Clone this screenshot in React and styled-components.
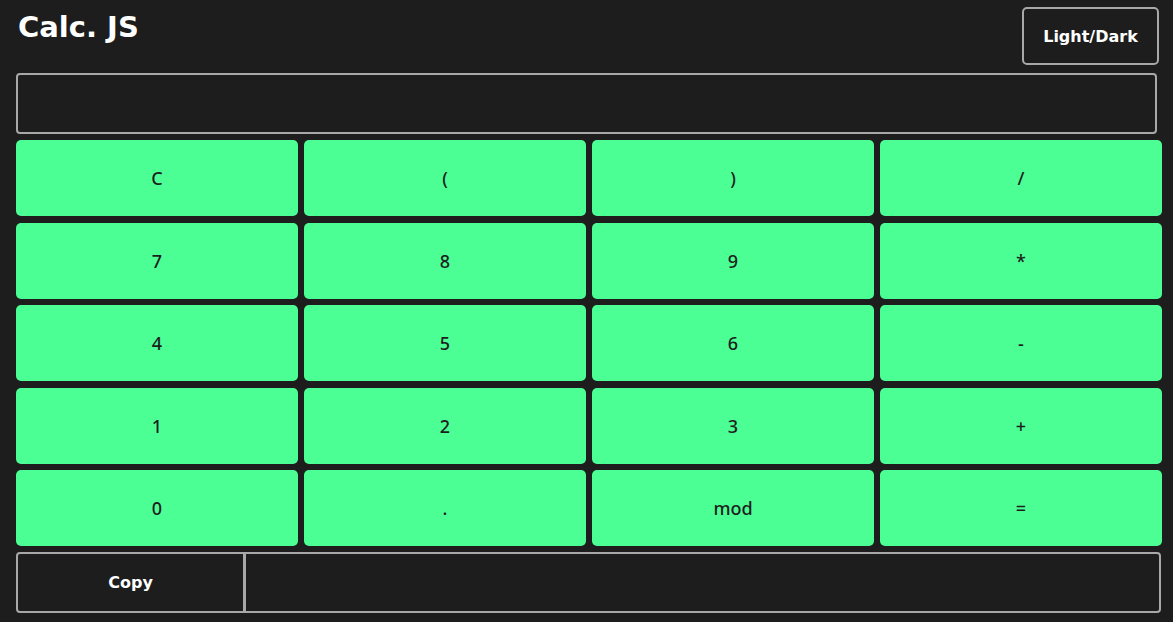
import styled, { createGlobalStyle } from "styled-components";

const GlobalStyle = createGlobalStyle`
  body {
    margin: 0;
    background: #1d1d1d;
    font-family: "DejaVu Sans", "Liberation Sans", sans-serif;
  }
`;

const Page = styled.div`
  padding: 0 11px 0 16px;
  display: flex;
  flex-direction: column;
`;

const Header = styled.header`
  display: flex;
  justify-content: space-between;
  align-items: flex-start;
  height: 73px;
`;

const Title = styled.h1`
  margin: 10px 0 0 2px;
  font-size: 29px;
  line-height: 34px;
  font-weight: bold;
  color: #ffffff;
`;

const ThemeButton = styled.button`
  margin-top: 7px;
  margin-right: 3px;
  width: 137px;
  height: 58px;
  background: transparent;
  border: 2px solid #a8a8a8;
  border-radius: 5px;
  color: #ffffff;
  font-family: inherit;
  font-weight: bold;
  font-size: 16px;
  cursor: pointer;
`;

const Display = styled.input`
  box-sizing: border-box;
  width: 1141px;
  height: 61px;
  background: transparent;
  border: 2px solid #a8a8a8;
  border-radius: 4px;
  color: #ffffff;
  font-family: inherit;
  font-size: 24px;
  padding: 0 12px;
  outline: none;
`;

const Keys = styled.div`
  margin-top: 6px;
  width: 1146px;
  display: grid;
  grid-template-columns: repeat(4, 1fr);
  grid-auto-rows: 76px;
  column-gap: 6px;
  row-gap: 6.5px;
`;

const Key = styled.button`
  background: #4bff95;
  border: none;
  border-radius: 5px;
  color: #1d1d1d;
  font-family: "Noto Sans", "DejaVu Sans", sans-serif;
  font-weight: 500;
  font-size: 18px;
  cursor: pointer;
`;

const ResultBar = styled.div`
  box-sizing: border-box;
  margin-top: 6px;
  width: 1145px;
  height: 61px;
  display: flex;
  border: 2px solid #a8a8a8;
  border-radius: 4px;
`;

const CopyButton = styled.button`
  width: 228px;
  background: transparent;
  border: none;
  border-right: 3px solid #a8a8a8;
  color: #ffffff;
  font-family: inherit;
  font-weight: bold;
  font-size: 16px;
  cursor: pointer;
`;

const Result = styled.div`
  flex: 1;
  color: #ffffff;
  font-size: 20px;
  display: flex;
  align-items: center;
  padding: 0 12px;
`;

const keys = [
  "C", "(", ")", "/",
  "7", "8", "9", "*",
  "4", "5", "6", "-",
  "1", "2", "3", "+",
  "0", ".", "mod", "=",
];

export default function App() {
  return (
    <>
      <GlobalStyle />
      <Page>
        <Header>
          <Title>Calc. JS</Title>
          <ThemeButton>Light/Dark</ThemeButton>
        </Header>
        <Display readOnly value="" />
        <Keys>
          {keys.map((k) => (
            <Key key={k}>{k}</Key>
          ))}
        </Keys>
        <ResultBar>
          <CopyButton>Copy</CopyButton>
          <Result />
        </ResultBar>
      </Page>
    </>
  );
}
